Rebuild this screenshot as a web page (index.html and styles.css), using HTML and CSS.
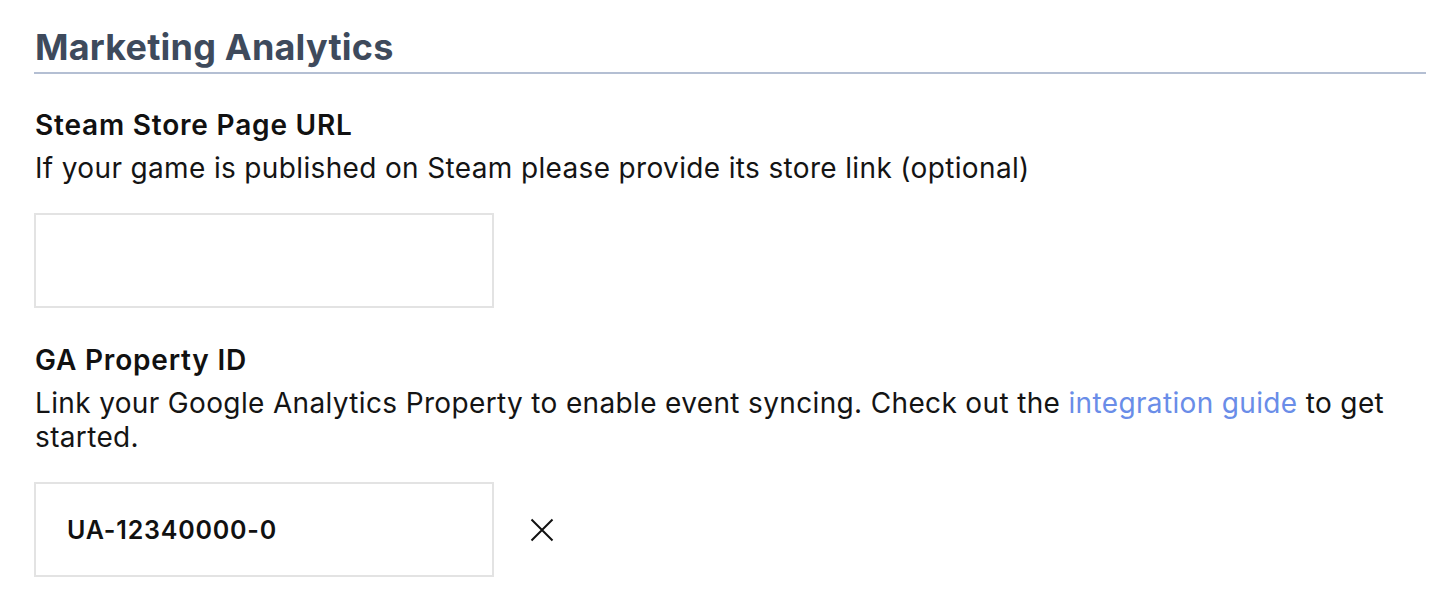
FILE: index.html
```html
<!DOCTYPE html>
<html lang="en">
<head>
    <meta charset="UTF-8">
    <meta name="viewport" content="width=device-width, initial-scale=1.0">
    <title>Marketing Analytics</title>
    <link rel="stylesheet" href="styles.css">
</head>
<body>
    <section class="settings-section">
        <h2 class="section-title">Marketing Analytics</h2>

        <div class="field">
            <label class="field-label" for="steamUrl">Steam Store Page URL</label>
            <p class="field-help">If your game is published on Steam please provide its store link (optional)</p>
            <div class="field-row">
                <input type="text" id="steamUrl" name="steamUrl" class="text-input">
            </div>
        </div>

        <div class="field">
            <label class="field-label" for="gaProperty">GA Property ID</label>
            <p class="field-help">Link your Google Analytics Property to enable event syncing. Check out the <a href="#" class="link">integration guide</a> to get started.</p>
            <div class="field-row">
                <input type="text" id="gaProperty" name="gaProperty" class="text-input" value="UA-12340000-0">
                <button type="button" class="clear-btn" aria-label="Clear">
                    <svg width="24" height="24" viewBox="0 0 24 24">
                        <path d="M1.5 1.5 L22.5 22.5 M22.5 1.5 L1.5 22.5" stroke="#111" stroke-width="2" fill="none"/>
                    </svg>
                </button>
            </div>
        </div>
    </section>
</body>
</html>
```

FILE: styles.css
```css
body {
    margin: 0;
    background-color: #fff;
    font-family: Inter, "Noto Sans", sans-serif;
    color: #111;
}

.settings-section {
    padding: 26px 30px 0 34px;
}

.section-title {
    margin: 0;
    padding: 0 0 4px 1px;
    font-size: 36px;
    font-weight: 700;
    letter-spacing: 0.2px;
    color: #3e4a5c;
    border-bottom: 2px solid #b4bfd3;
    line-height: 42px;
}

.field {
    margin-top: 34px;
}

.field + .field {
    margin-top: 35px;
}

.field-label {
    display: block;
    padding-left: 1px;
    font-size: 28px;
    font-weight: 600;
    letter-spacing: 0.8px;
    line-height: 34px;
}

.field-help {
    margin: 9px 0 0;
    padding-left: 1px;
    font-size: 28px;
    letter-spacing: 0.35px;
    line-height: 34px;
    color: #141414;
}

.link {
    color: #6a8de8;
    text-decoration: none;
}

.field-row {
    display: flex;
    align-items: center;
    margin-top: 28px;
}

.text-input {
    width: 460px;
    height: 95px;
    box-sizing: border-box;
    padding: 0 31px;
    border: 2px solid #e3e3e3;
    border-radius: 0;
    font-family: Inter, "Noto Sans", sans-serif;
    font-size: 25px;
    font-weight: 600;
    letter-spacing: 0.8px;
    color: #111;
    outline: none;
}

.clear-btn {
    margin-left: 36px;
    padding: 0;
    border: none;
    background: none;
    cursor: pointer;
    display: flex;
}
```
